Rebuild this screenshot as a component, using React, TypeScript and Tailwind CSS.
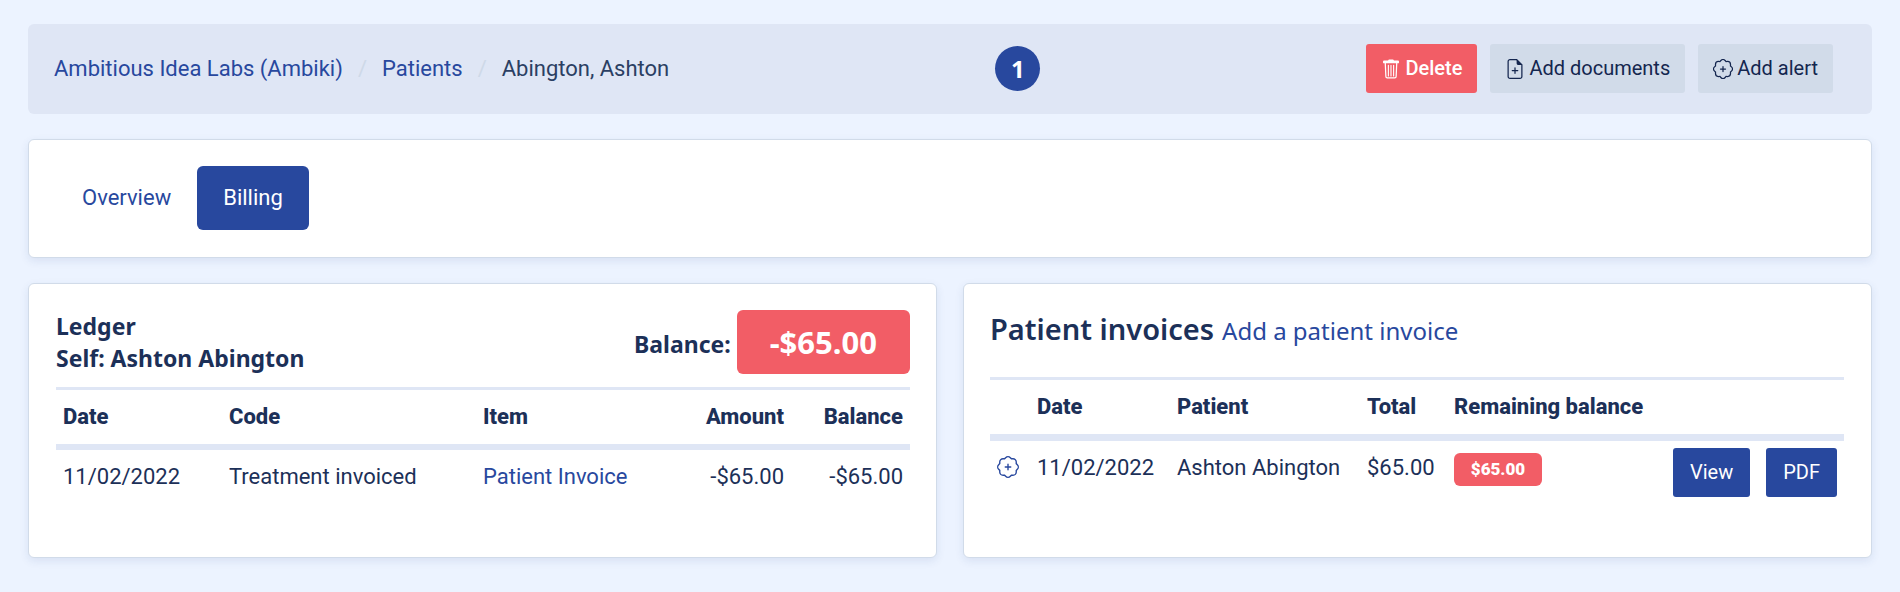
import type { ReactNode } from "react";
import { BsPatchPlus } from "react-icons/bs";

const heading = "font-['Noto_Sans',sans-serif]";
const th = "px-[7px] py-[11px] font-extrabold";
const solidButton = "rounded-[3px] bg-[#28489e] px-[17px] text-[20px] leading-[49px] text-white";
const softButton = "flex items-center gap-1 rounded-[3px] bg-[#d1dbe9] px-[15px] text-[#14264f]";

function TrashIcon() {
  return (
    <svg viewBox="0 0 16 16" fill="currentColor" aria-hidden="true" className="size-5">
      <path d="M5.6 1.1 6.3.3h3.4l.7.8h3.2c.5 0 .8.3.8.8v.8c0 .4-.3.7-.7.7H2.3c-.4 0-.7-.3-.7-.7v-.8c0-.5.3-.8.8-.8z" />
      <path
        d="M3.4 3.2 3.9 14c0 .7.5 1.1 1.1 1.1h6c.6 0 1.1-.4 1.1-1.1l.5-10.8"
        fill="none"
        stroke="currentColor"
        strokeWidth="1"
      />
      <path d="M5.9 5v8.5M8 5v8.5M10.1 5v8.5" stroke="currentColor" strokeWidth="0.9" strokeLinecap="round" />
    </svg>
  );
}

function FilePlusIcon() {
  return (
    <svg viewBox="0 0 16 16" fill="none" stroke="currentColor" aria-hidden="true" className="size-5">
      <path d="M9.3.5H4A1.5 1.5 0 0 0 2.5 2v12A1.5 1.5 0 0 0 4 15.5h8a1.5 1.5 0 0 0 1.5-1.5V4.7z" />
      <path d="M9.3.2v3.1c0 .9.6 1.5 1.5 1.5h3z" fill="currentColor" stroke="none" />
      <path d="M8 7v4.4M5.8 9.2h4.4" strokeLinecap="round" />
    </svg>
  );
}

function Card({ children, className = "" }: { children: ReactNode; className?: string }) {
  return (
    <section
      className={`rounded-md border border-[#d1dbe9] bg-white shadow-[0_3px_8px_rgba(40,72,140,0.10)] ${className}`}
    >
      {children}
    </section>
  );
}

function Breadcrumbs() {
  return (
    <nav aria-label="Breadcrumb">
      <ol className="flex items-center text-[22px] leading-8">
        <li>
          <a href="#labs" className="text-[#28489e]">Ambitious Idea Labs (Ambiki)</a>
        </li>
        <li aria-hidden="true" className="px-[15px] text-[#ced9e8]">/</li>
        <li>
          <a href="#patients" className="text-[#28489e]">Patients</a>
        </li>
        <li aria-hidden="true" className="px-[15px] text-[#ced9e8]">/</li>
        <li aria-current="page" className="text-[#2b3f63]">Abington, Ashton</li>
      </ol>
    </nav>
  );
}

function Ledger() {
  return (
    <Card className="pt-[26px] pr-[26px] pb-[53px] pl-[27px]">
      <div className="flex items-end justify-between">
        <h2 className={`${heading} text-[23px] leading-8 font-bold`}>
          Ledger
          <br />
          Self: Ashton Abington
        </h2>
        <div className={`${heading} flex items-center gap-1.5 text-[23px] leading-8 font-bold`}>
          <span className="pt-1">Balance:</span>
          <span className="rounded-md bg-[#f25d66] px-[33px] py-4 text-[31px] font-bold text-white">-$65.00</span>
        </div>
      </div>
      <table className="mt-[13px] w-full border-t-[3px] border-[#dfe6f5] text-left text-[22px] leading-8">
        <thead>
          <tr className="border-b-[6px] border-[#dfe6f5]">
            <th className={`${th} w-[166px]`}>Date</th>
            <th className={`${th} w-[254px]`}>Code</th>
            <th className={th}>Item</th>
            <th className={`${th} text-right`}>Amount</th>
            <th className={`${th} w-[119px] text-right`}>Balance</th>
          </tr>
        </thead>
        <tbody>
          <tr>
            <td className="px-[7px] py-[11px]">11/02/2022</td>
            <td className="px-[7px] py-[11px]">Treatment invoiced</td>
            <td className="px-[7px] py-[11px]">
              <a href="#invoice" className="text-[#28489e]">Patient Invoice</a>
            </td>
            <td className="px-[7px] py-[11px] text-right">-$65.00</td>
            <td className="px-[7px] py-[11px] text-right">-$65.00</td>
          </tr>
        </tbody>
      </table>
    </Card>
  );
}

function PatientInvoices() {
  return (
    <Card className="pt-[25px] pr-[27px] pb-12 pl-[26px]">
      <div className="flex items-baseline gap-2">
        <h2 className={`${heading} text-[29px] leading-10 font-semibold`}>Patient invoices</h2>
        <a href="#new-invoice" className={`${heading} text-[24px] leading-10 text-[#28489e]`}>
          Add a patient invoice
        </a>
      </div>
      <table className="mt-[26px] w-full border-t-[3px] border-[#dfe6f5] text-left text-[22px] leading-8">
        <thead>
          <tr className="border-b-[7px] border-[#dfe6f5]">
            <th className={`${th} w-[40px]`}></th>
            <th className={`${th} w-[140px]`}>Date</th>
            <th className={`${th} w-[190px]`}>Patient</th>
            <th className={`${th} w-[87px]`}>Total</th>
            <th className={th}>Remaining balance</th>
            <th className={th}></th>
          </tr>
        </thead>
        <tbody>
          <tr className="align-top">
            <td className="px-[7px] pt-[15px]">
              <button type="button" aria-label="Expand invoice" className="block text-[#28489e]">
                <BsPatchPlus className="size-[22px]" />
              </button>
            </td>
            <td className="px-[7px] pt-[11px]">11/02/2022</td>
            <td className="px-[7px] pt-[11px]">Ashton Abington</td>
            <td className="px-[7px] pt-[11px]">$65.00</td>
            <td className="px-[7px] pt-3">
              <span className="block w-[88px] rounded-md bg-[#f25d66] text-center text-[17px] leading-[33px] font-black text-white">
                $65.00
              </span>
            </td>
            <td className="px-[7px] pt-[7px]">
              <div className="flex justify-end gap-4">
                <a href="#view" className={solidButton}>View</a>
                <a href="#pdf" className={solidButton}>PDF</a>
              </div>
            </td>
          </tr>
        </tbody>
      </table>
    </Card>
  );
}

export default function App() {
  return (
    <div className="min-h-screen bg-[#ecf3ff] px-7 pt-6 pb-8 font-[Roboto,sans-serif] text-[#1c3058]">
      <header className="flex items-center justify-between rounded-md bg-[#dfe6f5] pt-5 pr-[39px] pb-[21px] pl-[26px]">
        <Breadcrumbs />
        <span className="flex size-[45px] items-center justify-center rounded-full bg-[#28489e] font-['Noto_Sans',sans-serif] text-[24px] font-bold text-white">
          1
        </span>
        <div className="flex gap-[13px] text-[20px] leading-[49px]">
          <button type="button" className="flex items-center gap-1 rounded-[3px] bg-[#f25d66] px-[15px] font-medium text-white">
            <TrashIcon />
            Delete
          </button>
          <button type="button" className={softButton}>
            <FilePlusIcon />
            Add documents
          </button>
          <button type="button" className={softButton}>
            <BsPatchPlus className="size-5" />
            Add alert
          </button>
        </div>
      </header>

      <Card className="mt-[25px] px-[27px] pt-[26px] pb-[27px]">
        <nav aria-label="Patient sections" className="flex text-[22px] leading-8">
          <a href="#overview" className="px-[26px] py-4 text-[#28489e]">Overview</a>
          <a href="#billing" aria-current="page" className="rounded-md bg-[#28489e] px-[26px] py-4 text-white">
            Billing
          </a>
        </nav>
      </Card>

      <div className="mt-[25px] grid grid-cols-2 gap-[26px]">
        <Ledger />
        <PatientInvoices />
      </div>
    </div>
  );
}
